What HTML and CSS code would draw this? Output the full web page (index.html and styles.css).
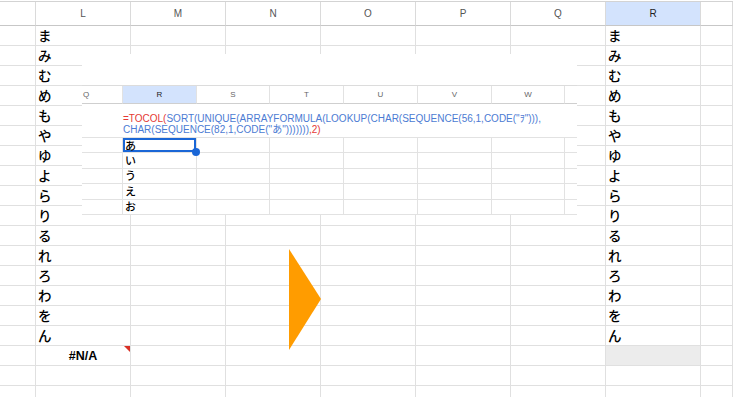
FILE: index.html
```html
<!DOCTYPE html>
<html lang="ja">
<head>
<meta charset="utf-8">
<title>Sheet</title>
<link rel="stylesheet" href="styles.css">
</head>
<body>
<div class="sheet">
  <div class="row head">
    <div class="c"></div><div class="c">L</div><div class="c">M</div><div class="c">N</div><div class="c">O</div><div class="c">P</div><div class="c">Q</div><div class="c hsel">R</div><div class="c"></div>
  </div>
  <div class="row"><div class="c"></div><div class="c kana">ま</div><div class="c"></div><div class="c"></div><div class="c"></div><div class="c"></div><div class="c"></div><div class="c kana">ま</div><div class="c"></div></div>
  <div class="row"><div class="c"></div><div class="c kana">み</div><div class="c"></div><div class="c"></div><div class="c"></div><div class="c"></div><div class="c"></div><div class="c kana">み</div><div class="c"></div></div>
  <div class="row"><div class="c"></div><div class="c kana">む</div><div class="c"></div><div class="c"></div><div class="c"></div><div class="c"></div><div class="c"></div><div class="c kana">む</div><div class="c"></div></div>
  <div class="row"><div class="c"></div><div class="c kana">め</div><div class="c"></div><div class="c"></div><div class="c"></div><div class="c"></div><div class="c"></div><div class="c kana">め</div><div class="c"></div></div>
  <div class="row"><div class="c"></div><div class="c kana">も</div><div class="c"></div><div class="c"></div><div class="c"></div><div class="c"></div><div class="c"></div><div class="c kana">も</div><div class="c"></div></div>
  <div class="row"><div class="c"></div><div class="c kana">や</div><div class="c"></div><div class="c"></div><div class="c"></div><div class="c"></div><div class="c"></div><div class="c kana">や</div><div class="c"></div></div>
  <div class="row"><div class="c"></div><div class="c kana">ゆ</div><div class="c"></div><div class="c"></div><div class="c"></div><div class="c"></div><div class="c"></div><div class="c kana">ゆ</div><div class="c"></div></div>
  <div class="row"><div class="c"></div><div class="c kana">よ</div><div class="c"></div><div class="c"></div><div class="c"></div><div class="c"></div><div class="c"></div><div class="c kana">よ</div><div class="c"></div></div>
  <div class="row"><div class="c"></div><div class="c kana">ら</div><div class="c"></div><div class="c"></div><div class="c"></div><div class="c"></div><div class="c"></div><div class="c kana">ら</div><div class="c"></div></div>
  <div class="row"><div class="c"></div><div class="c kana">り</div><div class="c"></div><div class="c"></div><div class="c"></div><div class="c"></div><div class="c"></div><div class="c kana">り</div><div class="c"></div></div>
  <div class="row"><div class="c"></div><div class="c kana">る</div><div class="c"></div><div class="c"></div><div class="c"></div><div class="c"></div><div class="c"></div><div class="c kana">る</div><div class="c"></div></div>
  <div class="row"><div class="c"></div><div class="c kana">れ</div><div class="c"></div><div class="c"></div><div class="c"></div><div class="c"></div><div class="c"></div><div class="c kana">れ</div><div class="c"></div></div>
  <div class="row"><div class="c"></div><div class="c kana">ろ</div><div class="c"></div><div class="c"></div><div class="c"></div><div class="c"></div><div class="c"></div><div class="c kana">ろ</div><div class="c"></div></div>
  <div class="row"><div class="c"></div><div class="c kana">わ</div><div class="c"></div><div class="c"></div><div class="c"></div><div class="c"></div><div class="c"></div><div class="c kana">わ</div><div class="c"></div></div>
  <div class="row"><div class="c"></div><div class="c kana">を</div><div class="c"></div><div class="c"></div><div class="c"></div><div class="c"></div><div class="c"></div><div class="c kana">を</div><div class="c"></div></div>
  <div class="row"><div class="c"></div><div class="c kana">ん</div><div class="c"></div><div class="c"></div><div class="c"></div><div class="c"></div><div class="c"></div><div class="c kana">ん</div><div class="c"></div></div>
  <div class="row"><div class="c"></div><div class="c err">#N/A</div><div class="c"></div><div class="c"></div><div class="c"></div><div class="c"></div><div class="c"></div><div class="c gray"></div><div class="c"></div></div>
  <div class="row"><div class="c"></div><div class="c"></div><div class="c"></div><div class="c"></div><div class="c"></div><div class="c"></div><div class="c"></div><div class="c"></div><div class="c"></div></div>
  <div class="row"><div class="c"></div><div class="c"></div><div class="c"></div><div class="c"></div><div class="c"></div><div class="c"></div><div class="c"></div><div class="c"></div><div class="c"></div></div>

  <div class="inset">
    <div class="ins-top"></div>
    <div class="irow ihead">
      <div class="ic iq">Q</div><div class="ic isel">R</div><div class="ic">S</div><div class="ic">T</div><div class="ic">U</div><div class="ic">V</div><div class="ic">W</div><div class="ic last"></div>
    </div>
    <div class="formula">
      <p><span class="red">=TOCOL(</span><span class="blue">SORT(UNIQUE(ARRAYFORMULA(LOOKUP(CHAR(SEQUENCE(56,1,CODE("ｦ"))),</span><br><span class="blue">CHAR(SEQUENCE(82,1,CODE("あ")))))))</span><span class="red">,2)</span></p>
    </div>
    <div class="irow"><div class="ic"></div><div class="ic ik active">あ</div><div class="ic"></div><div class="ic"></div><div class="ic"></div><div class="ic"></div><div class="ic"></div><div class="ic last"></div></div>
    <div class="irow"><div class="ic"></div><div class="ic ik">い</div><div class="ic"></div><div class="ic"></div><div class="ic"></div><div class="ic"></div><div class="ic"></div><div class="ic last"></div></div>
    <div class="irow"><div class="ic"></div><div class="ic ik">う</div><div class="ic"></div><div class="ic"></div><div class="ic"></div><div class="ic"></div><div class="ic"></div><div class="ic last"></div></div>
    <div class="irow"><div class="ic"></div><div class="ic ik">え</div><div class="ic"></div><div class="ic"></div><div class="ic"></div><div class="ic"></div><div class="ic"></div><div class="ic last"></div></div>
    <div class="irow"><div class="ic"></div><div class="ic ik">お</div><div class="ic"></div><div class="ic"></div><div class="ic"></div><div class="ic"></div><div class="ic"></div><div class="ic last"></div></div>
  </div>

  <svg class="arrow" width="33" height="101" viewBox="0 0 33 101"><polygon points="0,0 0,101 32,50" fill="#ff9c00"/></svg>
</div>
</body>
</html>
```
FILE: styles.css
```css
html, body {
  margin: 0;
  padding: 0;
  background: #fff;
  overflow: hidden;
}
.sheet {
  position: relative;
  width: 733px;
  height: 397px;
  overflow: hidden;
  font-family: "Liberation Sans", Arial, "Noto Sans CJK JP", sans-serif;
  color: #000;
}
.row {
  display: grid;
  grid-template-columns: 36px repeat(7, 95px) 1fr;
  height: 20px;
}
.c {
  box-sizing: border-box;
  border-right: 1px solid #e0e0e0;
  border-bottom: 1px solid #e0e0e0;
  display: flex;
  align-items: center;
  min-width: 0;
  position: relative;
}
.head {
  margin-top: 1px;
  height: 24px;
  border-top: 1px solid #d3d3d3;
}
.head .c {
  justify-content: center;
  font-size: 10px;
  color: #555;
  border-bottom-color: #c7c7c7;
  border-right-color: #dadada;
}
.head .hsel {
  background: #d3e3fd;
  color: #1f1f1f;
}
.kana {
  font-family: "Noto Sans CJK JP", sans-serif;
  font-size: 13.5px;
  font-weight: 500;
  line-height: 1;
  padding-left: 2px;
  padding-top: 1px;
}
.err {
  justify-content: center;
  font-weight: bold;
  font-size: 12.5px;
}
.err::after {
  content: "";
  position: absolute;
  top: 0;
  right: 0;
  border-top: 6px solid #d93025;
  border-left: 6px solid transparent;
}
.gray {
  background: #ececec;
}

/* inset screenshot */
.inset {
  position: absolute;
  left: 82px;
  top: 54px;
  width: 495px;
  height: 161px;
  background: #fff;
  overflow: hidden;
}
.ins-top {
  height: 31px;
  border-bottom: 1px solid #dcdcdc;
}
.irow {
  display: grid;
  grid-template-columns: 41px 74px 73px 74px 74px 74px 73px 1fr;
  height: 15.4px;
}
.ic {
  box-sizing: border-box;
  border-right: 1px solid #e2e2e2;
  border-bottom: 1px solid #e2e2e2;
  display: flex;
  align-items: center;
  position: relative;
}
.ic.last {
  border-right: none;
}
.ihead {
  height: 18px;
}
.ihead .ic {
  justify-content: center;
  font-size: 8px;
  color: #666;
  border-bottom-color: #cfcfcf;
}
.ihead .iq {
  justify-content: flex-start;
  padding-left: 1px;
}
.ihead .isel {
  background: #d3e3fd;
  color: #222;
}
.formula {
  height: 34px;
  box-sizing: border-box;
  border-bottom: 1px solid #e2e2e2;
  display: flex;
  align-items: flex-end;
  padding: 0 0 2px 41px;
}
.formula p {
  margin: 0;
  font-size: 10px;
  line-height: 11px;
  white-space: nowrap;
}
.red { color: #e53935; }
.blue { color: #4c7bd3; }
.ik {
  font-family: "Noto Sans CJK JP", sans-serif;
  font-size: 11px;
  font-weight: 500;
  line-height: 1;
  padding-left: 2px;
}
.active {
  box-shadow: inset 0 0 0 2px #1a66d6;
}
.active::after {
  content: "";
  position: absolute;
  right: -4px;
  bottom: -4px;
  width: 8px;
  height: 8px;
  border-radius: 50%;
  background: #1a66d6;
  z-index: 2;
}
.arrow {
  position: absolute;
  left: 289px;
  top: 249px;
}
```
